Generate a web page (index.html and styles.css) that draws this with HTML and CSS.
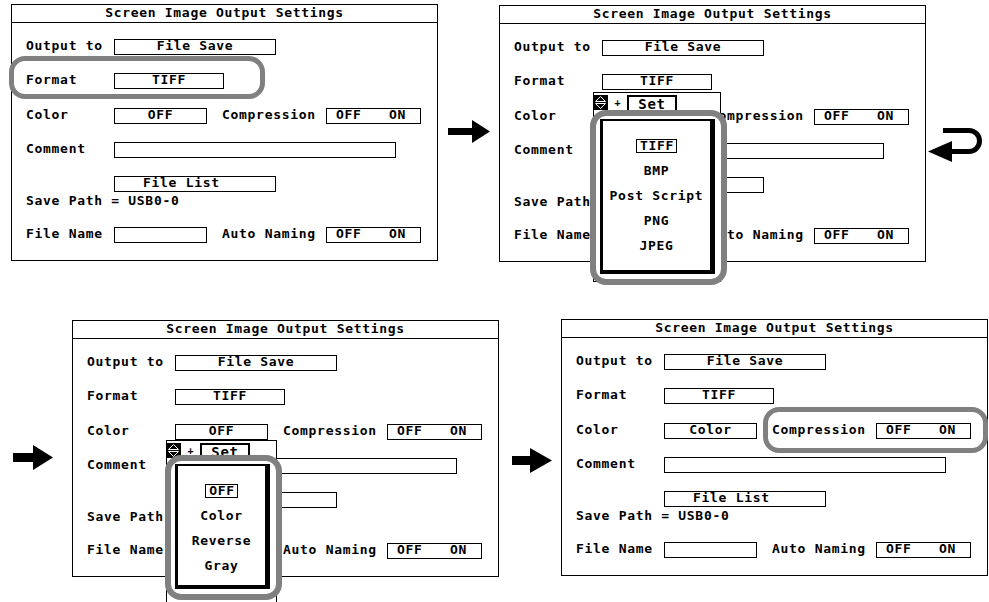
FILE: index.html
```html
<!DOCTYPE html>
<html lang="en">
<head>
    <meta charset="UTF-8">
    <title>Screen Image Output Settings</title>
    <link rel="stylesheet" href="styles.css">
</head>
<body>
    <div class="sheet">
        <div class="strip-row top-row">
            <!-- step 1: select Format -->
            <div class="panel">
                <div class="title">Screen Image Output Settings</div>
                <div class="form">
                    <div class="row"><span class="label">Output to</span><span class="field wide">File Save</span></div>
                    <div class="row"><span class="label">Format</span><span class="field fmt">TIFF</span></div>
                    <div class="row"><span class="label">Color</span><span class="field short">OFF</span><span class="label2">Compression</span><span class="toggle"><span>OFF</span><span>ON</span></span></div>
                    <div class="row"><span class="label">Comment</span><span class="field long"></span></div>
                    <div class="row indent"><span class="field wide list">File List</span></div>
                    <div class="pathline">Save Path = USB0-0</div>
                    <div class="row last"><span class="label">File Name</span><span class="field short"></span><span class="label2">Auto Naming</span><span class="toggle"><span>OFF</span><span>ON</span></span></div>
                </div>
                <div class="mark mark-format"></div>
            </div>

            <svg class="arrow arrow-a" width="42" height="24" viewBox="0 0 42 24">
                <rect x="0" y="8" width="25" height="7" fill="#000"/>
                <polygon points="24,0 42,11.5 24,23" fill="#000"/>
            </svg>

            <!-- step 2: format list -->
            <div class="panel panel-b">
                <div class="title">Screen Image Output Settings</div>
                <div class="form">
                    <div class="row"><span class="label">Output to</span><span class="field wide">File Save</span></div>
                    <div class="row"><span class="label">Format</span><span class="field fmt">TIFF</span></div>
                    <div class="row"><span class="label">Color</span><span class="field short">OFF</span><span class="label2">Compression</span><span class="toggle"><span>OFF</span><span>ON</span></span></div>
                    <div class="row"><span class="label">Comment</span><span class="field long"></span></div>
                    <div class="row indent"><span class="field wide list">File List</span></div>
                    <div class="pathline">Save Path = USB0-0</div>
                    <div class="row last"><span class="label">File Name</span><span class="field short"></span><span class="label2">Auto Naming</span><span class="toggle"><span>OFF</span><span>ON</span></span></div>
                </div>
                <div class="setbar setbar-format">
                    <svg class="jog" width="15" height="15" viewBox="0 0 15 15">
                        <rect width="15" height="15" fill="#000"/>
                        <polygon points="2.5,6.5 7.5,1.5 12.5,6.5" fill="none" stroke="#fff"/>
                        <polygon points="2.5,8.5 7.5,13.5 12.5,8.5" fill="none" stroke="#fff"/>
                    </svg>
                    <span class="plus">+</span>
                    <span class="setkey">Set</span>
                </div>
                <div class="choices choices-format">
                    <div class="frame">
                        <div class="item"><span class="picked">TIFF</span></div>
                        <div class="item">BMP</div>
                        <div class="item">Post Script</div>
                        <div class="item">PNG</div>
                        <div class="item">JPEG</div>
                    </div>
                </div>
            </div>

            <svg class="arrow arrow-back" width="58" height="38" viewBox="0 0 58 38">
                <path d="M16 5.5 H42 A10.5 10.5 0 0 1 42 26.5 H24" fill="none" stroke="#000" stroke-width="5"/>
                <polygon points="1,26.5 25,16 25,37" fill="#000"/>
            </svg>
        </div>

        <div class="strip-row bottom-row">
            <svg class="arrow arrow-c" width="40" height="25" viewBox="0 0 40 25">
                <rect x="0" y="8" width="21" height="9" fill="#000"/>
                <polygon points="20,0 40,12.5 20,25" fill="#000"/>
            </svg>

            <!-- step 3: color list -->
            <div class="panel panel-c">
                <div class="title">Screen Image Output Settings</div>
                <div class="form">
                    <div class="row"><span class="label">Output to</span><span class="field wide">File Save</span></div>
                    <div class="row"><span class="label">Format</span><span class="field fmt">TIFF</span></div>
                    <div class="row"><span class="label">Color</span><span class="field short">OFF</span><span class="label2">Compression</span><span class="toggle"><span>OFF</span><span>ON</span></span></div>
                    <div class="row"><span class="label">Comment</span><span class="field long"></span></div>
                    <div class="row indent"><span class="field wide list">File List</span></div>
                    <div class="pathline">Save Path = USB0-0</div>
                    <div class="row last"><span class="label">File Name</span><span class="field short"></span><span class="label2">Auto Naming</span><span class="toggle"><span>OFF</span><span>ON</span></span></div>
                </div>
                <div class="setbar setbar-color">
                    <svg class="jog" width="15" height="15" viewBox="0 0 15 15">
                        <rect width="15" height="15" fill="#000"/>
                        <polygon points="2.5,6.5 7.5,1.5 12.5,6.5" fill="none" stroke="#fff"/>
                        <polygon points="2.5,8.5 7.5,13.5 12.5,8.5" fill="none" stroke="#fff"/>
                    </svg>
                    <span class="plus">+</span>
                    <span class="setkey">Set</span>
                </div>
                <div class="choices choices-color">
                    <div class="frame">
                        <div class="item"><span class="picked">OFF</span></div>
                        <div class="item">Color</div>
                        <div class="item">Reverse</div>
                        <div class="item">Gray</div>
                    </div>
                </div>
            </div>

            <svg class="arrow arrow-d" width="40" height="25" viewBox="0 0 40 25">
                <rect x="0" y="8" width="19" height="9" fill="#000"/>
                <polygon points="18,0 40,12.5 18,25" fill="#000"/>
            </svg>

            <!-- step 4: compression -->
            <div class="panel">
                <div class="title">Screen Image Output Settings</div>
                <div class="form">
                    <div class="row"><span class="label">Output to</span><span class="field wide">File Save</span></div>
                    <div class="row"><span class="label">Format</span><span class="field fmt">TIFF</span></div>
                    <div class="row"><span class="label">Color</span><span class="field short">Color</span><span class="label2">Compression</span><span class="toggle"><span>OFF</span><span>ON</span></span></div>
                    <div class="row"><span class="label">Comment</span><span class="field long"></span></div>
                    <div class="row indent"><span class="field wide list">File List</span></div>
                    <div class="pathline">Save Path = USB0-0</div>
                    <div class="row last"><span class="label">File Name</span><span class="field short"></span><span class="label2">Auto Naming</span><span class="toggle"><span>OFF</span><span>ON</span></span></div>
                </div>
                <div class="mark mark-compress"></div>
            </div>
        </div>
    </div>
</body>
</html>
```

FILE: styles.css
```css
* {
    margin: 0;
    padding: 0;
    box-sizing: border-box;
}

html,
body {
    width: 989px;
    height: 602px;
    overflow: hidden;
    background: #ffffff;
}

body {
    font-family: 'DejaVu Sans Mono', 'Liberation Mono', monospace;
    font-weight: bold;
    font-size: 13px;
    letter-spacing: 0.7px;
    color: #000;
}

.sheet {
    display: flex;
    flex-direction: column;
}

.strip-row {
    display: flex;
    align-items: flex-start;
}

.top-row {
    height: 319px;
    padding-top: 4px;
    padding-left: 11px;
}

.bottom-row {
    height: 283px;
    padding-left: 13px;
}

/* arrows between the steps */
.arrow {
    flex: none;
    display: block;
}

.arrow-a {
    margin-left: 10px;
    margin-top: 116px;
}

.arrow-back {
    margin-left: 1px;
    margin-top: 121px;
}

.arrow-c {
    margin-top: 126px;
}

.arrow-d {
    margin-left: 13px;
    margin-top: 129px;
}

/* settings dialog */
.panel {
    position: relative;
    flex: none;
    width: 427px;
    height: 257px;
    border: 1px solid #000;
    background: #fff;
}

.panel-b {
    margin-left: 9px;
    margin-top: 1px;
}

.panel-c {
    margin-left: 19px;
    margin-top: 1px;
}

.panel-c + .arrow + .panel {
    margin-left: 9px;
}

.title {
    height: 18px;
    line-height: 15px;
    text-align: center;
    border-bottom: 1px solid #000;
}

.form {
    padding: 16px 0 0 14px;
}

.row {
    display: flex;
    height: 16px;
    margin-bottom: 18.3px;
}

.row.indent {
    padding-left: 88px;
    margin-bottom: 2px;
}

.row.last {
    margin-bottom: 0;
}

.label {
    width: 88px;
    line-height: 14px;
    white-space: nowrap;
}

.label2 {
    width: 104px;
    margin-left: 15px;
    line-height: 14px;
    white-space: nowrap;
}

.field {
    height: 16px;
    border: 1px solid #000;
    line-height: 11px;
    text-align: center;
    white-space: nowrap;
}

.field.wide {
    width: 162px;
}

.field.list {
    text-align: left;
    padding-left: 28px;
}

.field.fmt {
    width: 110px;
}

.field.short {
    width: 93px;
}

.field.long {
    width: 282px;
}

.toggle {
    display: flex;
    width: 95px;
    height: 16px;
    border: 1px solid #000;
    line-height: 11px;
    padding: 0 14px 0 9px;
    justify-content: space-between;
}

.pathline {
    height: 13px;
    line-height: 14px;
    margin-bottom: 20px;
    white-space: nowrap;
}

/* gray callout rings */
.mark {
    position: absolute;
    border: 5px solid #808080;
    border-radius: 16px;
}

.mark-format {
    left: -3px;
    top: 51px;
    width: 256px;
    height: 43px;
}

.mark-compress {
    left: 201px;
    top: 87px;
    width: 225px;
    height: 46px;
}

/* jog + Set strip */
.setbar {
    position: absolute;
    display: flex;
    align-items: flex-start;
    padding-top: 2px;
    border: 1px solid #000;
    background: #fff;
}

.setbar-format {
    left: 93px;
    top: 86px;
    width: 128px;
    height: 190px;
}

.setbar-color {
    left: 93px;
    top: 119px;
    width: 111px;
    height: 163px;
}

.jog {
    display: block;
    flex: none;
    margin-left: -1px;
}

.plus {
    width: 19px;
    font-size: 10px;
    line-height: 15px;
    text-align: center;
    letter-spacing: 0;
}

.setkey {
    width: 50px;
    height: 17px;
    border: 2px solid #000;
    font-size: 14px;
    line-height: 15px;
    text-align: center;
}

/* drop-down choice list */
.choices {
    position: absolute;
    border: 6px solid #808080;
    border-radius: 16px;
    background: #fff;
    padding: 3px 6px 5px 4px;
}

.choices-format {
    left: 90px;
    top: 104px;
    width: 137px;
    height: 175px;
}

.choices-color {
    left: 92px;
    top: 134px;
    width: 117px;
    height: 145px;
}

.frame {
    height: 100%;
    border-style: solid;
    border-color: #000;
    border-width: 2px 5px 4px 3px;
    padding-top: 12px;
}

.item {
    height: 25px;
    line-height: 25px;
    text-align: center;
    white-space: nowrap;
}

.picked {
    display: inline-block;
    border: 1px solid #000;
    line-height: 12px;
    padding: 0 2px 0 3px;
}
```
